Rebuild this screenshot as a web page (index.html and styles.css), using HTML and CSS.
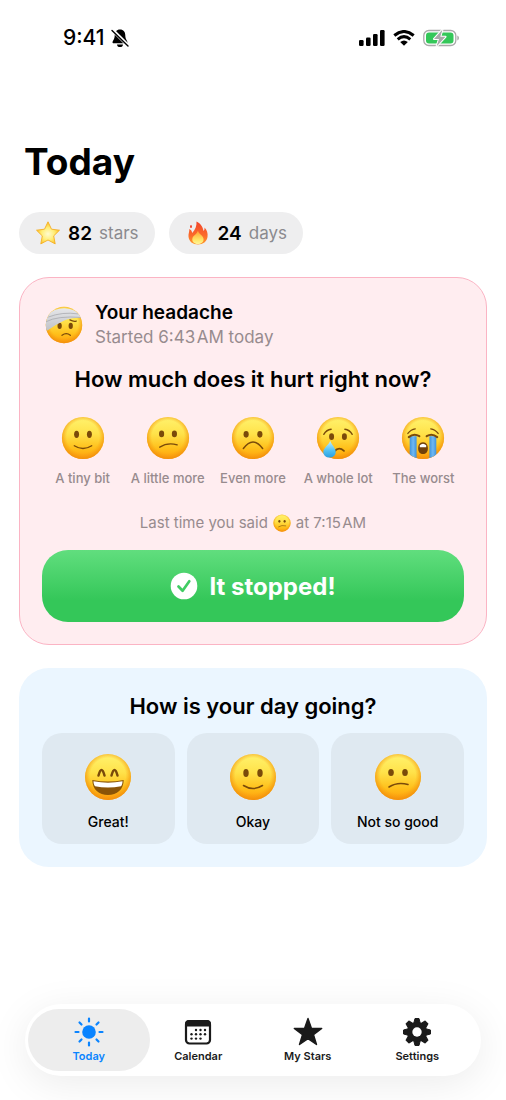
FILE: index.html
```html
<!DOCTYPE html>
<html lang="en">
<head>
    <meta charset="UTF-8">
    <meta name="viewport" content="width=device-width, initial-scale=1.0">
    <title>Today</title>
    <link rel="stylesheet" href="styles.css">
</head>
<body>
    <!-- shared emoji shapes -->
    <svg class="sprite" width="0" height="0" aria-hidden="true">
        <defs>
            <linearGradient id="skin" x1="0" y1="0" x2="0" y2="1">
                <stop offset="0" stop-color="#fff36e"/>
                <stop offset="0.4" stop-color="#ffe24a"/>
                <stop offset="0.75" stop-color="#ffbf1a"/>
                <stop offset="1" stop-color="#ff9f0c"/>
            </linearGradient>
            <radialGradient id="rim" cx="0.5" cy="0.47" r="0.53">
                <stop offset="0.72" stop-color="#f79a10" stop-opacity="0"/>
                <stop offset="1" stop-color="#f08c0c" stop-opacity="0.85"/>
            </radialGradient>
            <linearGradient id="tear" x1="0" y1="0" x2="0" y2="1">
                <stop offset="0" stop-color="#c5f0ff"/>
                <stop offset="0.6" stop-color="#4fc0f2"/>
                <stop offset="1" stop-color="#2a9fe0"/>
            </linearGradient>
            <linearGradient id="stream" x1="0" y1="0" x2="1" y2="0">
                <stop offset="0" stop-color="#3f93dc"/>
                <stop offset="0.5" stop-color="#6fb8f2"/>
                <stop offset="1" stop-color="#3f93dc"/>
            </linearGradient>
            <linearGradient id="bandage" x1="0" y1="0" x2="0" y2="1">
                <stop offset="0" stop-color="#e6e7ea"/>
                <stop offset="1" stop-color="#bfc1c6"/>
            </linearGradient>
            <radialGradient id="gold" cx="0.5" cy="0.55" r="0.5">
                <stop offset="0" stop-color="#fffbd0"/>
                <stop offset="0.55" stop-color="#ffee7a"/>
                <stop offset="1" stop-color="#fdc62c"/>
            </radialGradient>
            <linearGradient id="flame" x1="0" y1="0" x2="0" y2="1">
                <stop offset="0" stop-color="#f2452c"/>
                <stop offset="0.6" stop-color="#fb6a2a"/>
                <stop offset="1" stop-color="#ff9a2c"/>
            </linearGradient>
            <linearGradient id="flame-core" x1="0" y1="0" x2="0" y2="1">
                <stop offset="0" stop-color="#ff9c30"/>
                <stop offset="0.7" stop-color="#ffe667"/>
                <stop offset="1" stop-color="#fff59a"/>
            </linearGradient>
            <clipPath id="head"><circle cx="24" cy="24" r="23"/></clipPath>
        </defs>
        <symbol id="blank" viewBox="0 0 48 48">
            <circle cx="24" cy="24" r="23" fill="url(#skin)"/>
            <circle cx="24" cy="24" r="23" fill="url(#rim)"/>
        </symbol>
        <symbol id="smile" viewBox="0 0 48 48">
            <use href="#blank"/>
            <ellipse cx="17" cy="20" rx="2.7" ry="4" fill="#7a4a0a"/>
            <ellipse cx="31" cy="20" rx="2.7" ry="4" fill="#7a4a0a"/>
            <path d="M14.5 32.500 Q24 38.500 33.500 32.500" fill="none" stroke="#7a4a0a" stroke-width="1.500" stroke-linecap="round"/>
        </symbol>
        <symbol id="confused" viewBox="0 0 48 48">
            <use href="#blank"/>
            <ellipse cx="17" cy="19.500" rx="2.800" ry="3.600" fill="#7a4a0a"/>
            <ellipse cx="31" cy="19.500" rx="2.800" ry="3.600" fill="#7a4a0a"/>
            <path d="M15 34 Q23.500 28.500 34 31.500" fill="none" stroke="#7a4a0a" stroke-width="1.500" stroke-linecap="round"/>
        </symbol>
        <symbol id="frown" viewBox="0 0 48 48">
            <use href="#blank"/>
            <ellipse cx="16.500" cy="20" rx="2.800" ry="3.600" fill="#7a4a0a"/>
            <ellipse cx="31.500" cy="20" rx="2.800" ry="3.600" fill="#7a4a0a"/>
            <path d="M13.500 35.500 Q24 21 34.500 35.500" fill="none" stroke="#7a4a0a" stroke-width="1.600" stroke-linecap="round"/>
        </symbol>
        <symbol id="cry" viewBox="0 0 48 48">
            <use href="#blank"/>
            <ellipse cx="17" cy="22.500" rx="2.700" ry="3.600" fill="#7a4a0a"/>
            <ellipse cx="31" cy="22.500" rx="2.700" ry="3.600" fill="#7a4a0a"/>
            <path d="M8.500 20 Q11.500 15 16.500 14.500 M39.500 20 Q36.500 15 31.500 14.500" fill="none" stroke="#7a4a0a" stroke-width="1.500" stroke-linecap="round"/>
            <path d="M20 38.500 Q25 33 30.500 38" fill="none" stroke="#7a4a0a" stroke-width="2" stroke-linecap="round"/>
            <path d="M15.500 27 C17.500 32 21.500 35 21.500 39.200 C21.500 43 18.500 45.300 14.800 45.300 C11 45.300 8 43 8 39.200 C8 35 13.500 32 15.500 27 Z" fill="url(#tear)"/>
        </symbol>
        <symbol id="sob" viewBox="0 0 48 48">
            <use href="#blank"/>
            <g clip-path="url(#head)">
                <rect x="9.500" y="22" width="7.500" height="27" fill="url(#stream)"/>
                <rect x="31" y="22" width="7.500" height="27" fill="url(#stream)"/>
            </g>
            <path d="M7.500 19 Q11 14.500 15.500 14 M40.500 19 Q37 14.500 32.500 14" fill="none" stroke="#7a4a0a" stroke-width="1.500" stroke-linecap="round"/>
            <path d="M8.500 23 Q14 18.500 20 22 M39.500 23 Q34 18.500 28 22" fill="none" stroke="#7a4a0a" stroke-width="2.300" stroke-linecap="round"/>
            <path d="M24 28.500 C28 28.500 29.300 32 29.300 35.500 C29.300 39.500 27 41.500 24 41.500 C21 41.500 18.700 39.500 18.700 35.500 C18.700 32 20 28.500 24 28.500 Z" fill="#70400a"/>
            <path d="M20.500 32 Q24 28.500 27.500 32 V34 H20.500 Z" fill="#fff"/>
        </symbol>
        <symbol id="grin" viewBox="0 0 48 48">
            <use href="#blank"/>
            <path d="M14.500 22.500 Q17.500 11.500 20.500 22.500 M27.500 22.500 Q30.500 11.500 33.500 22.500" fill="none" stroke="#7a4a0a" stroke-width="2.500" stroke-linecap="round"/>
            <path d="M8.300 27 Q24 30 39.700 27 C39.700 36.500 33 42 24 42 C15 42 8.300 36.500 8.300 27 Z" fill="#8a5407"/>
            <path d="M9.500 28.300 Q24 31 38.500 28.300 C38.500 30.500 38 32 37 33.200 Q24 36 11 33.200 C10 32 9.500 30.500 9.500 28.300 Z" fill="#fff"/>
        </symbol>
        <symbol id="hurt" viewBox="0 0 48 48">
            <use href="#blank"/>
            <ellipse cx="18.500" cy="25" rx="2.700" ry="4" fill="#7a4a0a"/>
            <ellipse cx="32.500" cy="25" rx="2.700" ry="4" fill="#7a4a0a"/>
            <path d="M21.500 37 Q27 33 32 37 M31.500 17.500 Q36 20 39.500 19" fill="none" stroke="#7a4a0a" stroke-width="1.600" stroke-linecap="round"/>
            <g clip-path="url(#head)">
                <path d="M0 12 L12 5 Q26 0 38 6 L48 15 Q34 14 25 18 Q14 23 3 31 L0 30 Z" fill="url(#bandage)"/>
                <path d="M1 20 Q16 12 46 14.500 M4 14 Q22 7 42 10" fill="none" stroke="#a3a5aa" stroke-width="0.900"/>
            </g>
        </symbol>
    </svg>

    <header class="status-bar">
        <div class="status-left">
            <span>9:41</span>
            <svg class="bell" viewBox="0 0 18 20" aria-label="Silent">
                <path d="M9 1.500 C12.500 1.500 14.300 4 14.300 7.500 C14.300 11.500 16.500 12.500 16.500 14.500 C16.500 15 16 15.300 15.500 15.300 H2.500 C2 15.300 1.500 15 1.500 14.500 C1.500 12.500 3.700 11.500 3.700 7.500 C3.700 4 5.500 1.500 9 1.500 Z M6 16.400 H12 C12 18 10.700 19 9 19 C7.300 19 6 18 6 16.400 Z"/>
                <path d="M1.500 2 L17 17.500" stroke="#fff" stroke-width="3.400"/>
                <path d="M1 2.500 L17 18" stroke="#000" stroke-width="1.400" stroke-linecap="round"/>
            </svg>
        </div>
        <div class="status-right">
            <svg class="signal" viewBox="0 0 26 16" aria-label="Signal">
                <rect x="0" y="10" width="4.600" height="6" rx="1.200"/>
                <rect x="7" y="7.500" width="4.600" height="8.500" rx="1.200"/>
                <rect x="14" y="4" width="4.600" height="12" rx="1.200"/>
                <rect x="21" y="0" width="4.600" height="16" rx="1.200"/>
            </svg>
            <svg class="wifi" viewBox="0 0 22 16" aria-label="Wi-Fi">
                <path d="M1.300 5.500 Q11 -2.500 20.700 5.500 M4.700 9.300 Q11 4 17.300 9.300" fill="none" stroke="#000" stroke-width="3"/>
                <path d="M7.200 12 Q11 8.800 14.800 12 L11 15.800 Z"/>
            </svg>
            <svg class="battery" viewBox="0 0 37 18" aria-label="Charging">
                <rect x="0.800" y="1.500" width="32" height="15" rx="5" fill="none" stroke="#a9a9a9" stroke-width="1.300"/>
                <rect x="3" y="3.500" width="27.500" height="11" rx="3" fill="#34c759"/>
                <path d="M34.300 6.500 C36.500 7.300 36.500 10.700 34.300 11.500 Z" fill="#a9a9a9"/>
                <path d="M19.500 0.500 L11 10 H16 L13.500 17.500 L22.500 7.800 H17.300 Z" fill="#a9a9a9" stroke="#fff" stroke-width="2" paint-order="stroke" stroke-linejoin="round"/>
            </svg>
        </div>
    </header>

    <main class="content">
        <h1>Today</h1>

        <div class="stats">
            <div class="stat">
                <svg viewBox="0 0 24 24" aria-hidden="true"><path d="M12 0.800 L15.500 8.200 L23.500 9.200 L17.700 14.900 L19.200 22.900 L12 19 L4.800 22.900 L6.300 14.900 L0.500 9.200 L8.500 8.200 Z" fill="url(#gold)" stroke="#f5ae25" stroke-width="0.900" stroke-linejoin="round"/></svg>
                <strong>82</strong>
                <span>stars</span>
            </div>
            <div class="stat">
                <svg viewBox="0 0 24 24" aria-hidden="true">
                    <path d="M10.500 0.500 C15.500 3 17 7 17.500 10 C18.500 9 18.700 7.500 18.500 6.500 C21 9 22 12 21.500 16 C21 20.500 17 23.500 12 23.500 C7 23.500 2.800 20.500 2.500 15.500 C2.300 12.500 3.500 11 3.300 8 C5 8.800 6 10 6.200 12 C9.500 8.500 10.800 4.500 10.500 0.500 Z" fill="url(#flame)"/>
                    <path d="M12 9.500 C12.500 13 16 13.500 17.300 17 C18.500 20.500 15.500 23 12 23 C8 23 5.500 20.500 6.500 17 C7.300 14.500 10.800 13.500 12 9.500 Z" fill="url(#flame-core)"/>
                    <ellipse cx="5" cy="5.500" rx="1" ry="1.500" fill="#f2452c"/>
                </svg>
                <strong>24</strong>
                <span>days</span>
            </div>
        </div>

        <section class="card headache">
            <div class="headache-head">
                <svg viewBox="0 0 48 48" aria-hidden="true"><use href="#hurt"/></svg>
                <div>
                    <h3>Your headache</h3>
                    <p>Started 6:43&#8202;AM today</p>
                </div>
            </div>

            <h2>How much does it hurt right now?</h2>
            <div class="pain-scale">
                <button type="button"><svg viewBox="0 0 48 48" aria-hidden="true"><use href="#smile"/></svg>A tiny bit</button>
                <button type="button"><svg viewBox="0 0 48 48" aria-hidden="true"><use href="#confused"/></svg>A little more</button>
                <button type="button"><svg viewBox="0 0 48 48" aria-hidden="true"><use href="#frown"/></svg>Even more</button>
                <button type="button"><svg viewBox="0 0 48 48" aria-hidden="true"><use href="#cry"/></svg>A whole lot</button>
                <button type="button"><svg viewBox="0 0 48 48" aria-hidden="true"><use href="#sob"/></svg>The worst</button>
            </div>

            <p class="last-time">Last time you said <svg viewBox="0 0 48 48" aria-hidden="true"><use href="#confused"/></svg> at 7:15&#8202;AM</p>

            <button type="button" class="stopped-btn">
                <svg viewBox="0 0 28 28" aria-hidden="true">
                    <circle cx="14" cy="14" r="13.300" fill="#fff"/>
                    <path d="M8.500 14.500 L12.600 18.700 L19.300 9.300" fill="none" stroke="#40cc63" stroke-width="2.700" stroke-linecap="round" stroke-linejoin="round"/>
                </svg>
                It stopped!
            </button>
        </section>

        <section class="card day">
            <h2>How is your day going?</h2>
            <div class="moods">
                <button type="button"><svg viewBox="0 0 48 48" aria-hidden="true"><use href="#grin"/></svg>Great!</button>
                <button type="button"><svg viewBox="0 0 48 48" aria-hidden="true"><use href="#smile"/></svg>Okay</button>
                <button type="button"><svg viewBox="0 0 48 48" aria-hidden="true"><use href="#confused"/></svg>Not so good</button>
            </div>
        </section>
    </main>

    <nav class="tab-bar">
        <a href="#today" class="active">
            <svg viewBox="0 0 30 30" aria-hidden="true">
                <circle cx="15" cy="15" r="6.800"/>
                <path d="M15 1.500 V4.500 M15 25.500 V28.500 M1.500 15 H4.500 M25.500 15 H28.500 M5.500 5.500 L7.500 7.500 M22.500 22.500 L24.500 24.500 M5.500 24.500 L7.500 22.500 M22.500 7.500 L24.500 5.500" stroke="currentColor" stroke-width="2.200" stroke-linecap="round"/>
            </svg>
            Today
        </a>
        <a href="#calendar">
            <svg viewBox="0 0 30 30" aria-hidden="true">
                <rect x="3" y="4" width="24" height="22.500" rx="3.500" fill="none" stroke="currentColor" stroke-width="2.200"/>
                <path d="M2 9.500 V7 Q2 3 6 3 H24 Q28 3 28 7 V9.500 Z"/>
                <g>
                    <circle cx="13" cy="13" r="1.200"/><circle cx="17.500" cy="13" r="1.200"/><circle cx="22" cy="13" r="1.200"/>
                    <circle cx="8.500" cy="17.300" r="1.200"/><circle cx="13" cy="17.300" r="1.200"/><circle cx="17.500" cy="17.300" r="1.200"/><circle cx="22" cy="17.300" r="1.200"/>
                    <circle cx="8.500" cy="21.600" r="1.200"/><circle cx="13" cy="21.600" r="1.200"/><circle cx="17.500" cy="21.600" r="1.200"/>
                </g>
            </svg>
            Calendar
        </a>
        <a href="#stars">
            <svg viewBox="0 0 30 30" aria-hidden="true"><path d="M15 1.500 L18.400 11.200 L28.700 11.400 L20.500 17.600 L23.500 27.500 L15 21.600 L6.500 27.500 L9.500 17.600 L1.300 11.400 L11.600 11.200 Z" stroke="currentColor" stroke-width="1.400" stroke-linejoin="round"/></svg>
            My Stars
        </a>
        <a href="#settings">
            <svg viewBox="0 0 30 30" aria-hidden="true">
                <path id="teeth" d="M13 1.500 H17 L18.200 6 V24 L17 28.500 H13 L11.800 24 V6 Z M1.500 13 L6 11.800 H24 L28.500 13 V17 L24 18.200 H6 L1.500 17 Z" stroke="currentColor" stroke-linejoin="round"/>
                <use href="#teeth" transform="rotate(45 15 15)"/>
                <circle cx="15" cy="15" r="10"/>
                <circle cx="15" cy="15" r="4.700" fill="#fff"/>
            </svg>
            Settings
        </a>
    </nav>
</body>
</html>
```
FILE: styles.css
```css
* {
    box-sizing: border-box;
}

body {
    margin: 0;
    min-height: 100vh;
    display: flex;
    flex-direction: column;
    background: #fff;
    color: #000;
    font-family: Inter, "Liberation Sans", sans-serif;
}

h1, h2, h3, p {
    margin: 0;
}

button {
    border: none;
    background: none;
    padding: 0;
    color: inherit;
    font-family: inherit;
    cursor: pointer;
}

svg {
    display: block;
    flex: none;
}

/* status bar */
.status-bar {
    display: flex;
    justify-content: space-between;
    align-items: center;
    padding: 26px 46px 0 63px;
    height: 50px;
}

.status-left, .status-right {
    display: flex;
    align-items: center;
    gap: 8px;
}

.status-left {
    gap: 6px;
    font-size: 21px;
    font-weight: 500;
    line-height: 24px;
}

.bell {
    width: 18px;
    height: 20px;
}

.signal {
    width: 26px;
    height: 16px;
}

.wifi {
    width: 22px;
    height: 16px;
}

.battery {
    width: 37px;
    height: 18px;
}

/* page */
.content {
    padding: 88px 19px 24px;
}

h1 {
    padding-left: 5px;
    font-size: 37px;
    font-weight: 700;
    line-height: 48px;
}

.stats {
    display: flex;
    gap: 14px;
    margin: 26px 0 23px;
}

.stat {
    display: flex;
    align-items: center;
    gap: 7px;
    height: 42px;
    padding: 0 16px;
    border-radius: 21px;
    background: #eeeeef;
    font-size: 17px;
    color: #8a8a8e;
}

.stat svg {
    width: 26px;
    height: 24px;
}

.stat strong {
    font-size: 19px;
    font-weight: 600;
    color: #000;
}

/* cards */
.card {
    padding: 24px 23px 23px;
    border-radius: 30px;
}

.card h2 {
    font-size: 22px;
    font-weight: 600;
    line-height: 28px;
    text-align: center;
}

.headache {
    padding: 22px 22px;
    border: 1px solid #fbb4c4;
    background: #ffedf0;
}

.headache-head {
    display: flex;
    align-items: center;
    gap: 12px;
    padding-left: 3px;
    margin-bottom: 16px;
}

.headache-head svg {
    width: 38px;
    height: 38px;
}

.headache h3 {
    font-size: 19px;
    font-weight: 600;
    line-height: 25px;
}

.headache p {
    color: #978b8e;
}

.headache-head p {
    font-size: 17px;
    line-height: 24px;
}

.pain-scale {
    display: grid;
    grid-template-columns: repeat(5, 1fr);
    margin: 23px -2px 0;
}

.pain-scale button {
    display: flex;
    flex-direction: column;
    align-items: center;
    gap: 10px;
    font-size: 13px;
    font-weight: 500;
    line-height: 16px;
    color: #978b8e;
    white-space: nowrap;
}

.pain-scale svg {
    width: 44px;
    height: 44px;
}

.last-time {
    display: flex;
    justify-content: center;
    align-items: center;
    gap: 5px;
    margin: 27px 0 17px;
    font-size: 15px;
    line-height: 20px;
}

.last-time svg {
    width: 18px;
    height: 18px;
}

.stopped-btn {
    display: flex;
    justify-content: center;
    align-items: center;
    gap: 11px;
    width: 100%;
    height: 72px;
    border-radius: 26px;
    background: linear-gradient(#61de7e, #34c759 70%, #34c759);
    color: #fff;
    font-size: 24px;
    font-weight: 700;
}

.stopped-btn svg {
    width: 28px;
    height: 28px;
}

.day {
    margin-top: 23px;
    background: #ebf6ff;
}

.moods {
    display: grid;
    grid-template-columns: repeat(3, 1fr);
    gap: 12px;
    margin-top: 13px;
}

.moods button {
    display: flex;
    flex-direction: column;
    align-items: center;
    gap: 12px;
    padding: 20px 0 13px;
    border-radius: 20px;
    background: #dfe9f1;
    font-size: 14px;
    font-weight: 500;
    line-height: 18px;
}

.moods svg {
    width: 48px;
    height: 48px;
}

/* bottom tabs */
.tab-bar {
    display: grid;
    grid-template-columns: repeat(4, 1fr);
    margin: auto 25px 24px;
    padding: 5px 9px;
    border-radius: 36px;
    background: #fff;
    box-shadow: 0 8px 40px rgba(0, 0, 0, 0.08);
}

.tab-bar a {
    display: flex;
    flex-direction: column;
    align-items: center;
    gap: 2px;
    margin: 0 -6px;
    padding: 8px 0 7px;
    border-radius: 31px;
    color: #1a1a1a;
    fill: currentColor;
    font-size: 11px;
    font-weight: 600;
    line-height: 15px;
    text-decoration: none;
}

.tab-bar svg {
    width: 30px;
    height: 30px;
}

.tab-bar a.active {
    background: #ededed;
    color: #0a84ff;
}
```
